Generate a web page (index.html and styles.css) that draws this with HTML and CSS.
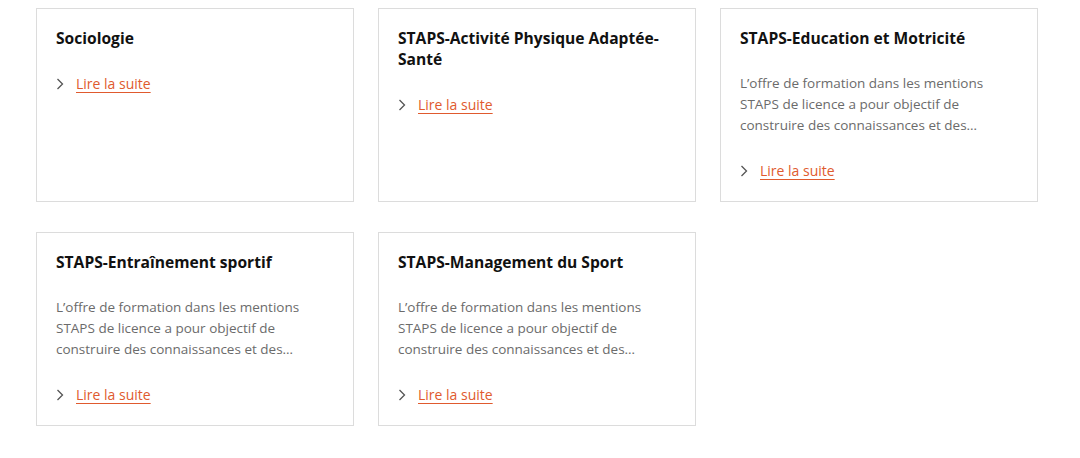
FILE: index.html
```html
<!DOCTYPE html>
<html lang="fr">
<head>
<meta charset="utf-8">
<link rel="stylesheet" href="styles.css">
</head>
<body>
<div class="grid">
  <div class="card">
    <h3 class="title">Sociologie</h3>
    <a class="more" href="#"><svg class="chev" viewBox="0 0 8 12" width="8" height="12"><path d="M1.5 1 L6.5 6 L1.5 11" fill="none" stroke="#555" stroke-width="1.3"/></svg><span>Lire la suite</span></a>
  </div>
  <div class="card">
    <h3 class="title">STAPS-Activité Physique Adaptée-Santé</h3>
    <a class="more" href="#"><svg class="chev" viewBox="0 0 8 12" width="8" height="12"><path d="M1.5 1 L6.5 6 L1.5 11" fill="none" stroke="#555" stroke-width="1.3"/></svg><span>Lire la suite</span></a>
  </div>
  <div class="card">
    <h3 class="title">STAPS-Education et Motricité</h3>
    <p class="desc">L’offre de formation dans les mentions STAPS de licence a pour objectif de construire des connaissances et des…</p>
    <a class="more" href="#"><svg class="chev" viewBox="0 0 8 12" width="8" height="12"><path d="M1.5 1 L6.5 6 L1.5 11" fill="none" stroke="#555" stroke-width="1.3"/></svg><span>Lire la suite</span></a>
  </div>
  <div class="card">
    <h3 class="title">STAPS-Entraînement sportif</h3>
    <p class="desc">L’offre de formation dans les mentions STAPS de licence a pour objectif de construire des connaissances et des…</p>
    <a class="more" href="#"><svg class="chev" viewBox="0 0 8 12" width="8" height="12"><path d="M1.5 1 L6.5 6 L1.5 11" fill="none" stroke="#555" stroke-width="1.3"/></svg><span>Lire la suite</span></a>
  </div>
  <div class="card">
    <h3 class="title">STAPS-Management du Sport</h3>
    <p class="desc">L’offre de formation dans les mentions STAPS de licence a pour objectif de construire des connaissances et des…</p>
    <a class="more" href="#"><svg class="chev" viewBox="0 0 8 12" width="8" height="12"><path d="M1.5 1 L6.5 6 L1.5 11" fill="none" stroke="#555" stroke-width="1.3"/></svg><span>Lire la suite</span></a>
  </div>
</div>
</body>
</html>
```
FILE: styles.css
```css
html, body {
  margin: 0;
  padding: 0;
  background: #fff;
}
body {
  font-family: "Open Sans", "Noto Sans", sans-serif;
  padding: 8px 0 0 36px;
}
.grid {
  display: grid;
  grid-template-columns: repeat(3, 318px);
  grid-auto-rows: 194px;
  column-gap: 24px;
  row-gap: 30px;
}
.card {
  box-sizing: border-box;
  border: 1px solid #dcdcdc;
  padding: 19px 19px 0 19px;
  display: flex;
  flex-direction: column;
  align-items: flex-start;
}
.title {
  margin: 0 0 24px 0;
  font-size: 15.6px;
  line-height: 21px;
  font-weight: 700;
  color: #111;
}
.desc {
  margin: 0 0 24px 0;
  font-size: 13.5px;
  line-height: 21px;
  color: #6b6b6b;
  padding-right: 30px;
}
.more {
  display: flex;
  align-items: center;
  font-size: 14px;
  line-height: 21px;
  color: #e05a2e;
  text-decoration: underline;
  text-underline-offset: 3px;
  text-decoration-thickness: 1px;
}
.chev {
  margin-right: 12px;
  display: block;
}
```
